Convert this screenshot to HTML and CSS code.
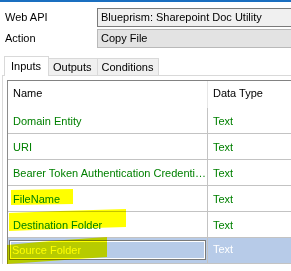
FILE: index.html
```html
<!DOCTYPE html>
<html lang="en">
<head>
    <meta charset="UTF-8">
    <meta name="viewport" content="width=device-width, initial-scale=1.0">
    <title>Web API Action</title>
    <link rel="stylesheet" href="styles.css">
</head>
<body>

    <div class="window">
        <!-- Web API / Action selection -->
        <div class="props">
            <div class="prop">
                <span class="prop-label">Web API</span>
                <div class="prop-value">Blueprism: Sharepoint Doc Utility</div>
            </div>
            <div class="prop">
                <span class="prop-label">Action</span>
                <div class="prop-value readonly">Copy File</div>
            </div>
        </div>

        <!-- Tabs -->
        <div class="tabs">
            <div class="tab active">Inputs</div>
            <div class="tab">Outputs</div>
            <div class="tab">Conditions</div>
        </div>

        <div class="tab-panel">
            <div class="grid">
                <div class="row head">
                    <div class="cell name">Name</div>
                    <div class="cell type">Data Type</div>
                </div>
                <div class="row">
                    <div class="cell name">Domain Entity</div>
                    <div class="cell type">Text</div>
                </div>
                <div class="row">
                    <div class="cell name">URI</div>
                    <div class="cell type">Text</div>
                </div>
                <div class="row">
                    <div class="cell name">Bearer Token Authentication Credentials</div>
                    <div class="cell type">Text</div>
                </div>
                <div class="row">
                    <div class="cell name">FileName</div>
                    <div class="cell type">Text</div>
                </div>
                <div class="row">
                    <div class="cell name">Destination Folder</div>
                    <div class="cell type">Text</div>
                </div>
                <div class="row selected">
                    <div class="cell name"><div class="edit">Source Folder</div></div>
                    <div class="cell type">Text</div>
                </div>
            </div>
        </div>
    </div>

    <!-- Highlighter marks drawn over the screenshot -->
    <svg class="marker" width="291" height="271" viewBox="0 0 291 271">
        <polygon points="11,190 73,189 73,204 11,205" />
        <polygon points="9,213 60,211 126,209 126,227 60,229 9,231" />
        <polygon points="7,245 50,241 107,237 107,257 50,261 7,264" />
    </svg>

</body>
</html>
```

FILE: styles.css
```css
body {
    margin: 0;
    font-family: "Liberation Sans", Arial, sans-serif;
    font-size: 11px;
    color: #000;
    background-color: #fff;
    position: relative;
    width: 291px;
    height: 271px;
    overflow: hidden;
}

.window {
    border-top: 2px solid #1a6fc0;
    height: 269px;
}

.props {
    padding-top: 6px;
    display: flex;
    flex-direction: column;
    gap: 2px;
}

.prop {
    display: grid;
    grid-template-columns: 97px 1fr;
    height: 19px;
}

.prop-label {
    padding-left: 5px;
    line-height: 19px;
}

.prop-value {
    box-sizing: border-box;
    height: 19px;
    line-height: 17px;
    padding-left: 3px;
    border: 1px solid #7a7a7a;
    border-right: none;
    background-color: #f0f0f0;
    white-space: nowrap;
    overflow: hidden;
}

.prop-value.readonly {
    border-color: #b9b9b9;
    background-color: #e3e3e3;
}

.tabs {
    display: flex;
    align-items: flex-end;
    margin-top: 8px;
    padding-left: 4px;
    height: 19px;
}

.tab {
    box-sizing: border-box;
    height: 17px;
    line-height: 16px;
    padding: 0 5px 0 4px;
    border: 1px solid #d9d9d9;
    border-bottom: none;
    background-color: #f0f0f0;
}

.tab + .tab {
    border-left: none;
}

.tab.active {
    height: 20px;
    line-height: 18px;
    padding: 0 7px 0 6px;
    margin-bottom: -1px;
    background-color: #fff;
    position: relative;
}

.tab-panel {
    margin-left: 2px;
    border-top: 1px solid #d9d9d9;
    border-left: 1px solid #d9d9d9;
    padding: 4px 0 0 4px;
}

.grid {
    border-top: 1px solid #828282;
    border-left: 1px solid #8c8c8c;
}

.row {
    display: grid;
    grid-template-columns: 200px 1fr;
    height: 25px;
    border-bottom: 1px solid #c3c3c3;
    color: #008000;
}

.row.head {
    height: 27px;
    border-bottom: none;
    color: #000;
}

.cell {
    padding-left: 5px;
    line-height: 26px;
    white-space: nowrap;
    overflow: hidden;
    text-overflow: ellipsis;
}

.cell.name {
    border-right: 1px solid #c3c3c3;
}

.row.head .cell.name {
    border-right-color: #e6e6e6;
}

.row.head .cell {
    line-height: 25px;
}

.row.selected {
    background-color: #b7cbe8;
    color: #fff;
}

.row.selected .cell.name {
    padding: 2px 1px 0 1px;
}

.row.selected .cell.type {
    line-height: 23px;
}

.edit {
    box-sizing: border-box;
    height: 20px;
    line-height: 18px;
    padding-left: 2px;
    border: 1px solid #7a7a7a;
    box-shadow: inset 0 0 0 1px #fff;
}

.marker {
    position: absolute;
    top: 0;
    left: 0;
    pointer-events: none;
    mix-blend-mode: multiply;
}

.marker polygon {
    fill: #ffff00;
}
```
